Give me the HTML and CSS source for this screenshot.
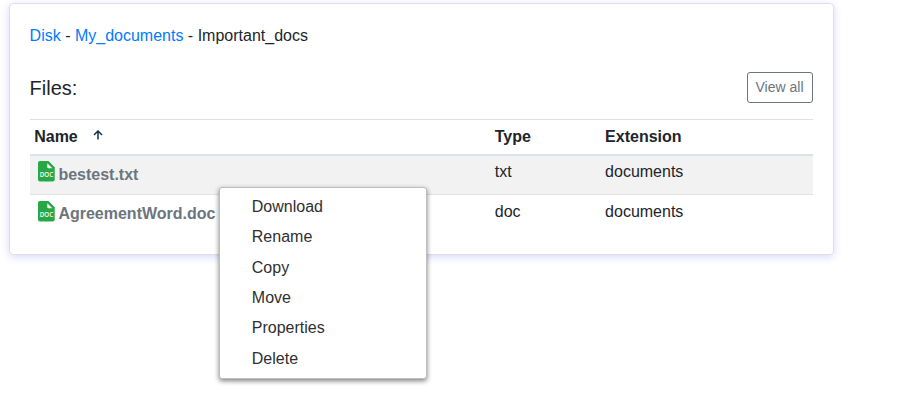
FILE: index.html
```html
<!DOCTYPE html>
<html lang="en">
<head>
<meta charset="utf-8">
<title>Files</title>
<link rel="stylesheet" href="styles.css">
</head>
<body>
<main class="card">
  <nav class="crumbs"><a href="#">Disk</a> - <a href="#">My_documents</a> - Important_docs</nav>
  <header class="toolbar">
    <h1 class="title">Files:</h1>
    <button class="view-all">View all</button>
  </header>
  <div class="files">
    <div class="row head"><div class="cell">Name<svg class="arrow" viewBox="0 0 10 10"><path d="M5 9.500V1.200M1 5L5 1l4 4"/></svg></div><div class="cell">Type</div><div class="cell">Extension</div></div>
    <div class="row striped">
      <div class="cell name"><svg class="icon" viewBox="0 0 17 21"><path fill="#28a745" d="M2 0h8.500L16.700 6.300V18.500a2 2 0 0 1-2 2H2a2 2 0 0 1-2-2V2a2 2 0 0 1 2-2z"/><path fill="#fff" d="M9.300 2.300L14.300 7.300H10.300a1 1 0 0 1-1-1z"/><text x="8.400" y="16.200" text-anchor="middle" class="doc-label">DOC</text></svg>bestest.txt</div>
      <div class="cell">txt</div><div class="cell">documents</div>
    </div>
    <div class="row last">
      <div class="cell name"><svg class="icon" viewBox="0 0 17 21"><path fill="#28a745" d="M2 0h8.500L16.700 6.300V18.500a2 2 0 0 1-2 2H2a2 2 0 0 1-2-2V2a2 2 0 0 1 2-2z"/><path fill="#fff" d="M9.300 2.300L14.300 7.300H10.300a1 1 0 0 1-1-1z"/><text x="8.400" y="16.200" text-anchor="middle" class="doc-label">DOC</text></svg>AgreementWord.doc</div>
      <div class="cell">doc</div><div class="cell">documents</div>
    </div>
  </div>
</main>
<ul class="menu">
  <li>Download</li>
  <li>Rename</li>
  <li>Copy</li>
  <li>Move</li>
  <li>Properties</li>
  <li>Delete</li>
</ul>
</body>
</html>
```
FILE: styles.css
```css
* { box-sizing: border-box; }
body {
  min-height: 420px;
  margin: 0;
  padding: 3px 0 0 9px;
  background: #fff;
  color: #212529;
  font: 16px/24px "Liberation Sans", Arial, sans-serif;
}
.card {
  width: 825px;
  height: 252px;
  padding: 20px 20px 20px 19.600px;
  border: 1px solid #dfdfdf;
  border-radius: 4px;
  box-shadow: 0 2px 8px rgba(0, 0, 255, .16);
}
.crumbs { height: 24px; }
.crumbs a { color: #007bff; text-decoration: none; }
.toolbar {
  display: flex;
  justify-content: space-between;
  height: 47px;
  margin-top: 24px;
}
.title { margin: 4px 0 0; font-size: 20px; font-weight: 400; line-height: 24px; }
.view-all {
  width: 66px;
  height: 31px;
  padding: 0 1px 0 0;
  border: 1px solid #6c757d;
  border-radius: 3px;
  background: #fff;
  color: #6c757d;
  font: 14px/21px "Liberation Sans", Arial, sans-serif;
}
.row {
  display: grid;
  grid-template-columns: 460.400px 110.300px 1fr;
  height: 40px;
  border-top: 1px solid #dee2e6;
}
.cell { padding: 4.800px; }
.cell:first-child { padding-left: 4.600px; }
.head { height: 37px; border-bottom: 2px solid #dee2e6; font-weight: 700; }
.striped { height: 38px; border-top: 0; background: #f2f2f2; }
.striped .cell { padding-top: 4px; }
.name { display: flex; color: #6c757d; font-weight: 700; line-height: 29px; }
.last .name { line-height: 27px; }
.icon { width: 17px; height: 21px; margin: 1px 3.400px 0 3.800px; flex: none; }
.doc-label { font: 600 6.200px "Open Sans", sans-serif; fill: #fff; }
.arrow {
  width: 10px;
  height: 10px;
  margin-left: 15px;
  vertical-align: 2px;
  fill: none;
  stroke: #17334d;
  stroke-width: 1.500;
}
.menu {
  position: absolute;
  left: 219px;
  top: 187px;
  width: 208px;
  height: 192px;
  margin: 0;
  padding: 4px 0;
  border: 1px solid #bebebe;
  border-radius: 3px;
  background: #fff;
  box-shadow: 0 2px 5px rgba(0, 0, 0, .5);
  color: #2f2f2f;
  list-style: none;
}
.menu li { height: 30.360px; padding: 3px 31.800px; }
```
